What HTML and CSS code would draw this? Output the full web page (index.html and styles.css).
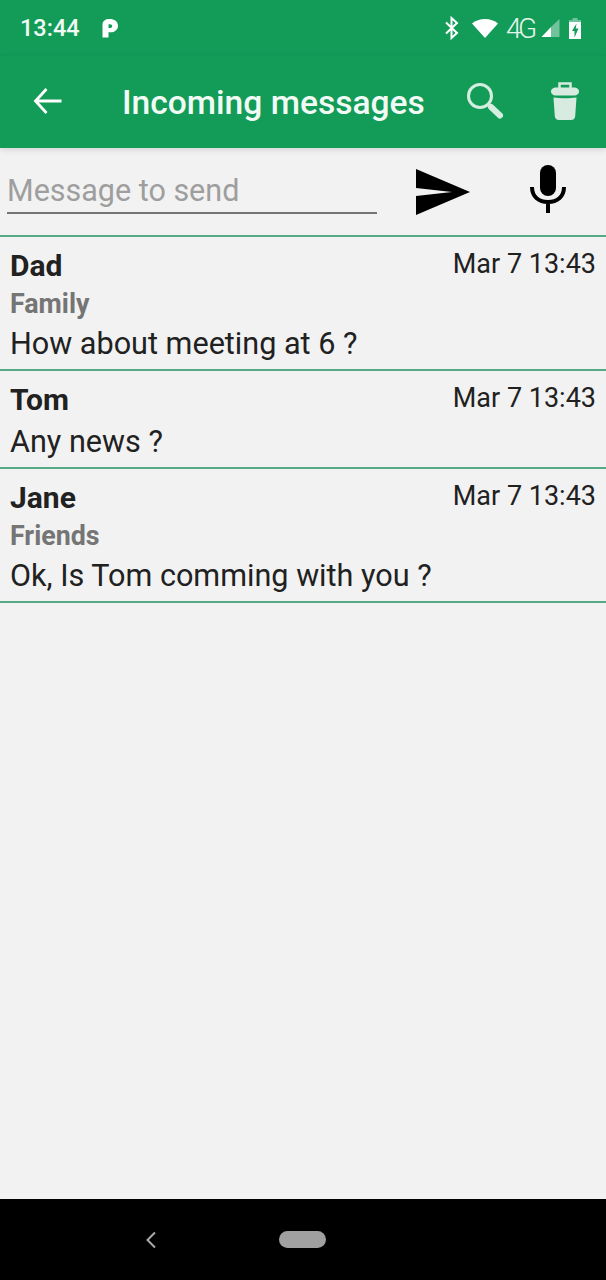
FILE: index.html
```html
<!DOCTYPE html>
<html lang="en">
<head>
    <meta charset="UTF-8">
    <meta name="viewport" content="width=device-width, initial-scale=1.0">
    <title>Incoming messages</title>
    <link rel="stylesheet" href="styles.css">
</head>
<body>

    <!-- Status bar -->
    <div class="status-bar">
        <span class="clock">13:44</span>
        <svg class="parking-icon" width="18" height="20" viewBox="0 0 18 20">
            <path fill="#fff" d="M1.5 19.5V6.5C1.5 3 4.5 1 8.5 1C13.5 1 17 3.7 17 7.7C17 11.7 13.8 14.3 9.5 14.3H7.5V19C7.5 19.4 7.2 19.6 6.800 19.6H2C1.700 19.600 1.500 19.700 1.500 19.500ZM7.500 6.500V10H9C10.300 10 11.200 9.300 11.200 8.200C11.200 7 10.300 6.300 9 6.300C8.200 6.300 7.500 6.200 7.500 6.500Z"/>
        </svg>
        <div class="status-right">
            <svg class="bluetooth-icon" width="18" height="24" viewBox="0 0 18 24" fill="none" stroke="#fff" stroke-width="2">
                <path d="M3 6.500L14 17L8.500 22V2L14 7L3 17.500"/>
            </svg>
            <svg class="wifi-icon" width="28" height="20" viewBox="0 0 28 20">
                <path fill="#fff" d="M1 5.500C4.500 2.500 9 1 14 1C19 1 23.500 2.500 27 5.500L14 20Z"/>
            </svg>
            <span class="net-label">4G</span>
            <svg class="signal-icon" width="19" height="20" viewBox="0 0 19 20">
                <path fill="#fff" fill-opacity="0.4" d="M18.500 1V19H10V9Z"/>
                <path fill="#fff" d="M10 9V19H0.500Z"/>
            </svg>
            <svg class="battery-icon" width="12" height="21" viewBox="0 0 12 21">
                <path fill="#fff" fill-opacity="0.4" d="M3.500 0H8.500V2H12V5H0V2H3.500Z"/>
                <path fill="#fff" fill-rule="evenodd" d="M0 4H12V21H0ZM7.500 5.500L3 13H5.500V19.500L9.500 10.500H6.800Z"/>
            </svg>
        </div>
    </div>

    <!-- Toolbar -->
    <div class="toolbar">
        <svg class="back-icon" width="30" height="26" viewBox="0 0 30 26" fill="none" stroke="#fff" stroke-width="2.800">
            <path d="M28.500 13H3M13.500 1L2.500 13L13.500 25"/>
        </svg>
        <h1 class="toolbar-title">Incoming messages</h1>
        <svg class="search-icon" width="38" height="38" viewBox="0 0 38 38" fill="none">
            <circle cx="14" cy="14" r="11.500" stroke="#d5eee0" stroke-width="3"/>
            <path d="M22 22L25 25" stroke="#d5eee0" stroke-width="2.500"/>
            <path d="M25 25L34 33.500" stroke="#d5eee0" stroke-width="6" stroke-linecap="round"/>
        </svg>
        <svg class="trash-icon" width="28" height="38" viewBox="0 0 28 38">
            <path fill="none" stroke="#d8ebe1" stroke-width="2.500" d="M8.500 7V1.500H19.500V7"/>
            <path fill="#d8ebe1" d="M4 5.500H24C26.500 6 28 7.500 28 9.500C28 11.500 26.500 13 24 13.500H4C1.500 13 0 11.500 0 9.500C0 7.500 1.500 6 4 5.500Z"/>
            <path fill="#d8ebe1" d="M2.500 15.500C9 16.500 19 16.500 25.500 15.500L24.200 34C24 36.500 22.500 38 20 38H8C5.500 38 4 36.500 3.800 34Z"/>
        </svg>
    </div>

    <!-- Message input -->
    <div class="compose">
        <div class="message-input">Message to send</div>
        <svg class="send-icon" width="54" height="46" viewBox="0 0 54 46">
            <path fill="#000" d="M0 0L54 23L0 46V27L36 23L0 19Z"/>
        </svg>
        <svg class="mic-icon" width="36" height="48" viewBox="0 0 36 48">
            <rect x="10" y="0" width="16" height="31" rx="8" fill="#000"/>
            <path fill="none" stroke="#000" stroke-width="4" d="M2 22C2 32 9 37 18 37C27 37 34 32 34 22M18 37V48"/>
        </svg>
    </div>

    <!-- Messages -->
    <div class="message-list">
        <div class="message">
            <div class="message-head">
                <span class="sender">Dad</span>
                <span class="date">Mar 7 13:43</span>
            </div>
            <div class="group">Family</div>
            <div class="text">How about meeting at 6 ?</div>
        </div>
        <div class="message">
            <div class="message-head">
                <span class="sender">Tom</span>
                <span class="date">Mar 7 13:43</span>
            </div>
            <div class="text">Any news ?</div>
        </div>
        <div class="message">
            <div class="message-head">
                <span class="sender">Jane</span>
                <span class="date">Mar 7 13:43</span>
            </div>
            <div class="group">Friends</div>
            <div class="text">Ok, Is Tom comming with you ?</div>
        </div>
    </div>

    <!-- Navigation bar -->
    <div class="nav-bar">
        <svg class="nav-back" width="12" height="18" viewBox="0 0 12 18" fill="none" stroke="#aaa" stroke-width="2">
            <path d="M10 1.500L2.500 9L10 16.500"/>
        </svg>
        <div class="nav-home"></div>
    </div>

</body>
</html>
```

FILE: styles.css
```css
html, body {
    margin: 0;
    padding: 0;
}
body {
    width: 606px;
    height: 1280px;
    display: flex;
    flex-direction: column;
    overflow: hidden;
    font-family: Roboto, "Liberation Sans", sans-serif;
    background-color: #f2f2f2;
    color: #212121;
}
.status-bar {
    height: 56px;
    flex: none;
    display: flex;
    align-items: center;
    padding: 0 25px 0 20px;
    background-color: #129c58;
    color: #fff;
}
.clock {
    font-size: 23.5px;
    font-weight: 500;
    color: #f2faf5;
}
.parking-icon {
    margin-left: 21px;
}
.status-right {
    margin-left: auto;
    display: flex;
    align-items: center;
}
.wifi-icon {
    margin-left: 10px;
}
.net-label {
    width: 34px;
    margin-left: 7px;
    font-size: 28px;
    letter-spacing: -3.5px;
    color: #e6f5ec;
    font-weight: 300;
}
.signal-icon {
    margin-left: 1px;
}
.battery-icon {
    margin-left: 9px;
}
.toolbar {
    height: 92px;
    flex: none;
    display: flex;
    align-items: center;
    background-color: #129c58;
    position: relative;
    z-index: 1;
    box-shadow: 0 2px 6px rgba(0, 0, 0, 0.12);
}
.back-icon {
    margin-left: 33px;
    margin-top: -2px;
}
.toolbar-title {
    margin: 0 0 0 59px;
    font-size: 33.6px;
    font-weight: 500;
    color: #f2faf5;
}
.search-icon {
    margin-left: 41px;
    margin-top: -2px;
}
.trash-icon {
    margin-left: 47px;
    margin-top: -2px;
}
.compose {
    height: 89px;
    flex: none;
    display: flex;
    align-items: center;
    box-sizing: border-box;
    border-bottom: 2px solid #57a888;
}
.message-input {
    width: 370px;
    margin-left: 7px;
    margin-top: 4px;
    padding-bottom: 4px;
    border-bottom: 2px solid #757575;
    font-size: 30.5px;
    line-height: 35px;
    color: #9e9e9e;
}
.send-icon {
    margin-left: 39px;
}
.mic-icon {
    margin-left: 60px;
    margin-top: -5px;
}
.message {
    padding: 11px 10px 5px;
    border-bottom: 2px solid #57a888;
}
.message-head {
    display: flex;
    justify-content: space-between;
}
.sender {
    font-size: 30px;
    line-height: 36px;
    font-weight: 700;
}
.date {
    font-size: 27px;
    line-height: 32px;
}
.group {
    margin-top: 3px;
    margin-bottom: -1px;
    font-size: 26.8px;
    line-height: 34px;
    font-weight: 700;
    color: #757575;
}
.text {
    margin-top: 4px;
    font-size: 30.6px;
    line-height: 40px;
}
.nav-bar {
    margin-top: auto;
    height: 81px;
    flex: none;
    display: flex;
    align-items: center;
    background-color: #000;
}
.nav-back {
    margin-left: 145px;
}
.nav-home {
    width: 47px;
    height: 17px;
    margin-left: 122px;
    border-radius: 9px;
    background-color: #a0a0a0;
}
```
